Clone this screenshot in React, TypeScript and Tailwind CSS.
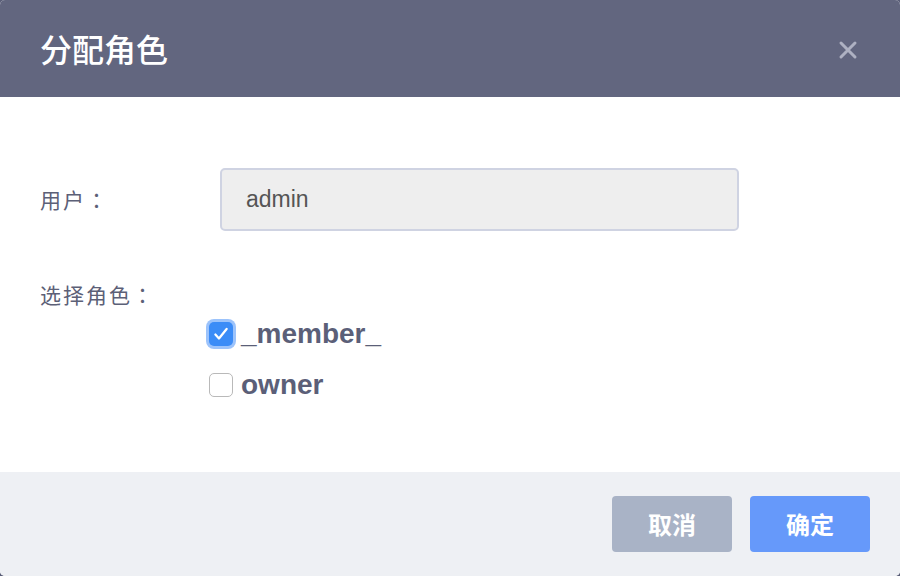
import React, { useState } from 'react';

const font = { fontFamily: '"Noto Sans CJK SC", "Liberation Sans", sans-serif' };
const colonFont = { fontFamily: '"Noto Sans CJK JP", sans-serif' };

const RoleOption: React.FC<{ label: string; checked: boolean; onToggle: () => void }> = ({ label, checked, onToggle }) => (
  <button onClick={onToggle} className="flex items-center gap-[8px] h-[26px]">
    {checked ? (
      <span className="w-[24px] h-[24px] rounded-[5px] bg-[#3b8cf7] ring-[3px] ring-[#9cc3fb] flex items-center justify-center">
        <svg viewBox="0 0 16 16" className="w-[18px] h-[18px]" fill="none" stroke="white" strokeWidth={2} strokeLinecap="round" strokeLinejoin="round">
          <path d="M3 8.5l3.2 3.5 6.8-8.5" />
        </svg>
      </span>
    ) : (
      <span className="w-[24px] h-[24px] rounded-[5px] bg-white border border-[#b9b9b9]" />
    )}
    <span className="text-[28px] font-bold text-[#5b5f78] leading-none" style={{ fontFamily: '"Liberation Sans", "Noto Sans CJK SC", sans-serif' }}>{label}</span>
  </button>
);

export default function App() {
  const [roles, setRoles] = useState({ _member_: true, owner: false });
  const toggle = (k: keyof typeof roles) => setRoles(r => ({ ...r, [k]: !r[k] }));

  return (
    <div className="w-[900px] h-[576px] bg-[#5a5e78]" style={font}>
      <div className="w-full h-full rounded-[5px] overflow-hidden bg-white flex flex-col">
        <div className="h-[97px] bg-[#62667f] flex items-center justify-between pl-[40px] pr-[40px] pb-[2px]">
          <h3 className="text-[32px] font-medium text-white leading-none">分配角色</h3>
          <button className="w-[24px] h-[24px] flex items-center justify-center mt-[4px]">
            <svg viewBox="0 0 20 20" className="w-[20px] h-[20px]" fill="none" stroke="#aeb1c2" strokeWidth={3} strokeLinecap="round">
              <path d="M3 3l14 14M17 3L3 17" />
            </svg>
          </button>
        </div>

        <div className="flex-1 pl-[40px] pt-[71px]">
          <div className="flex items-center">
            <label className="w-[180px] text-[21px] tracking-[2px] text-[#5c6077]">
              用户<span style={colonFont}>：</span>
            </label>
            <div className="w-[519px] h-[63px] bg-[#eeeeee] border-2 border-[#cfd3e2] rounded-[5px] flex items-center pl-[24px] text-[23px] text-[#555555]" style={{ fontFamily: '"Liberation Sans", sans-serif' }}>
              admin
            </div>
          </div>
          <div className="mt-[53px] text-[21px] tracking-[2px] text-[#5c6077] leading-none">
            选择角色<span style={colonFont}>：</span>
          </div>
          <div className="mt-[16px] ml-[169px] flex flex-col gap-[25px]">
            <RoleOption label="_member_" checked={roles._member_} onToggle={() => toggle('_member_')} />
            <RoleOption label="owner" checked={roles.owner} onToggle={() => toggle('owner')} />
          </div>
        </div>

        <div className="h-[104px] bg-[#eef0f4] flex items-center justify-end gap-[18px] pr-[30px]">
          <button className="w-[120px] h-[56px] rounded-[4px] bg-[#a9b3c6] text-white text-[24px] font-semibold">取消</button>
          <button className="w-[120px] h-[56px] rounded-[4px] bg-[#6699fa] text-white text-[24px] font-semibold">确定</button>
        </div>
      </div>
    </div>
  );
}
